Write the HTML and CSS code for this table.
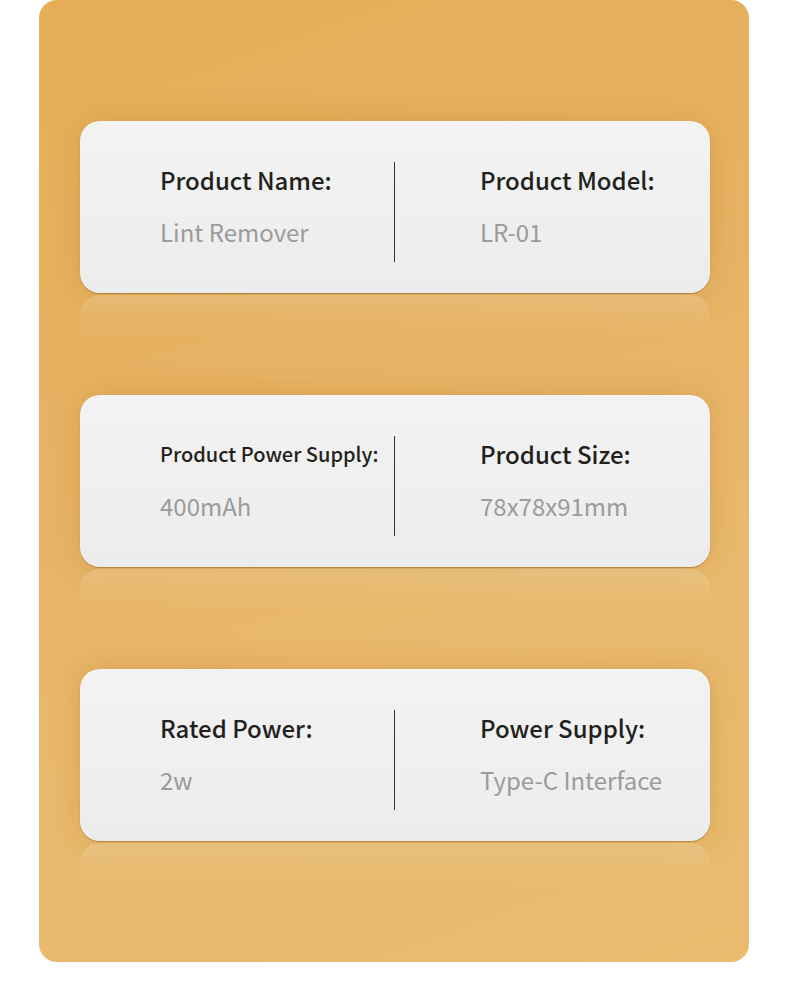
FILE: index.html
```html
<!DOCTYPE html>
<html>
<head>
<meta charset="utf-8">
<link rel="stylesheet" href="styles.css">
</head>
<body>
<div class="panel">
  <div class="card">
    <div class="cell left">
      <div class="label">Product Name:</div>
      <div class="value">Lint Remover</div>
    </div>
    <div class="divider"></div>
    <div class="cell right">
      <div class="label">Product Model:</div>
      <div class="value">LR-01</div>
    </div>
  </div>
  <div class="card">
    <div class="cell left">
      <div class="label small">Product Power Supply:</div>
      <div class="value">400mAh</div>
    </div>
    <div class="divider"></div>
    <div class="cell right">
      <div class="label">Product Size:</div>
      <div class="value">78x78x91mm</div>
    </div>
  </div>
  <div class="card">
    <div class="cell left">
      <div class="label">Rated Power:</div>
      <div class="value">2w</div>
    </div>
    <div class="divider"></div>
    <div class="cell right">
      <div class="label">Power Supply:</div>
      <div class="value">Type-C Interface</div>
    </div>
  </div>
</div>
</body>
</html>
```

FILE: styles.css
```css
html, body {
  margin: 0;
  padding: 0;
  background: #ffffff;
}
body {
  font-family: "Noto Sans CJK SC", "Noto Sans", sans-serif;
}
.panel {
  margin-left: 39px;
  width: 710px;
  height: 962px;
  box-sizing: border-box;
  padding: 121px 39px 0 41px;
  border-radius: 18px;
  background: linear-gradient(160deg, #e5ae57 0%, #e6b263 35%, #e8b96e 65%, #e9bb6f 100%);
  display: flex;
  flex-direction: column;
  gap: 102px;
}
.card {
  position: relative;
  height: 172px;
  border-radius: 20px;
  background: linear-gradient(180deg, #f3f3f3 0%, #ececec 100%);
  box-shadow: 0 1px 1px rgba(120, 80, 20, 0.45), 0 0 30px rgba(190, 120, 30, 0.32);
  display: grid;
  grid-template-columns: 314px 1px 1fr;
  align-items: start;
}
.card::after {
  content: "";
  position: absolute;
  left: 0;
  right: 0;
  top: 174px;
  height: 40px;
  border-radius: 20px 20px 0 0;
  background: linear-gradient(180deg, rgba(255, 255, 255, 0.18) 0%, rgba(255, 255, 255, 0.06) 50%, rgba(255, 255, 255, 0) 100%);
}
.divider {
  margin-top: 41px;
  height: 100px;
  background: #333;
}
.cell {
  padding-top: 39px;
}
.left {
  padding-left: 80px;
}
.right {
  padding-left: 85px;
}
.label {
  font-size: 24px;
  line-height: 40px;
  color: #231f1c;
  font-weight: 500;
}
.label.small {
  font-size: 20px;
}
.value {
  margin-top: 12px;
  font-size: 24px;
  line-height: 40px;
  color: #9b9b9b;
}
```
